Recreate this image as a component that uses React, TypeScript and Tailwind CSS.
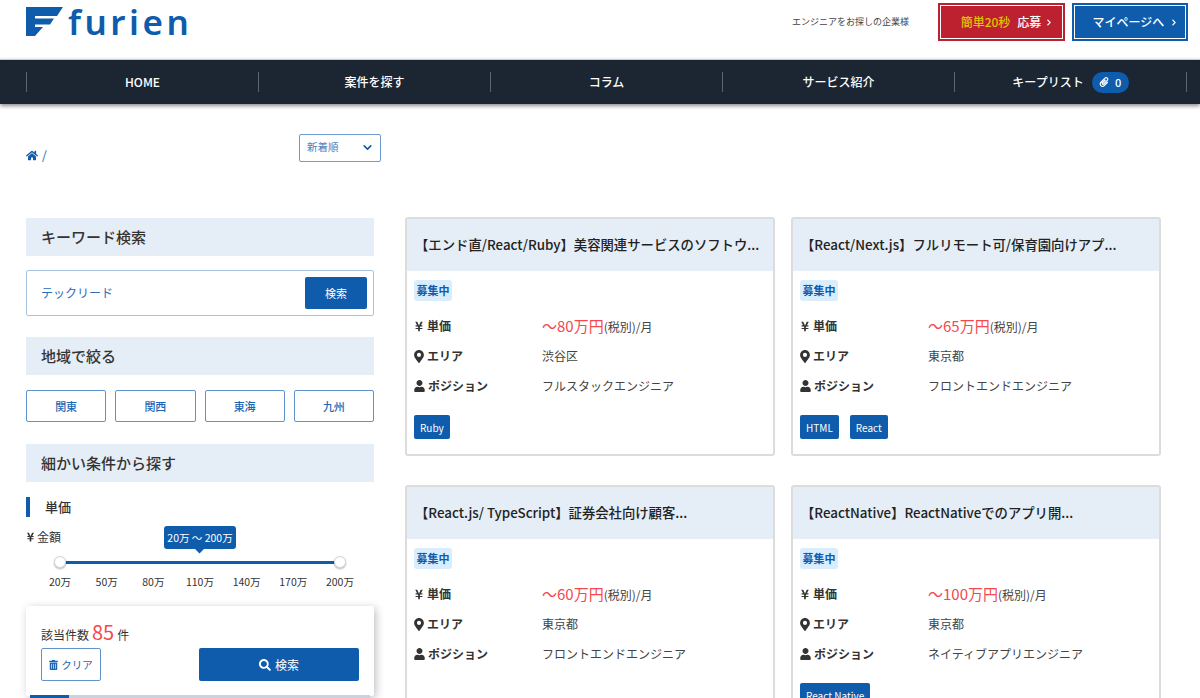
import { FaChevronRight, FaHome, FaMapMarkerAlt, FaPaperclip, FaSearch, FaTrashAlt, FaUser, FaYenSign } from 'react-icons/fa'
import { FiChevronDown } from 'react-icons/fi'

const font = { fontFamily: '"Noto Sans CJK JP", "Noto Sans", sans-serif' }

const navItems = ['HOME', '案件を探す', 'コラム', 'サービス紹介']
const areas = ['関東', '関西', '東海', '九州']
const ticks = ['20万', '50万', '80万', '110万', '140万', '170万', '200万']

const jobs = [
  { title: '【エンド直/React/Ruby】美容関連サービスのソフトウ...', price: '〜80万円', area: '渋谷区', position: 'フルスタックエンジニア', tags: ['Ruby'] },
  { title: '【React/Next.js】フルリモート可/保育園向けアプ...', price: '〜65万円', area: '東京都', position: 'フロントエンドエンジニア', tags: ['HTML', 'React'] },
  { title: '【React.js/ TypeScript】証券会社向け顧客...', price: '〜60万円', area: '東京都', position: 'フロントエンドエンジニア', tags: [] },
  { title: '【ReactNative】ReactNativeでのアプリ開...', price: '〜100万円', area: '東京都', position: 'ネイティブアプリエンジニア', tags: ['React Native'] },
]

function Logo() {
  return (
    <svg width="37" height="29" viewBox="0 0 37 29" className="shrink-0 mt-[4px]">
      <path d="M0 0H37L31 9H9V11.5H28L24 17.5H9V20H17L9 29H0Z" fill="#0f5cac" />
    </svg>
  )
}

function SectionTitle({ children }: { children: React.ReactNode }) {
  return (
    <div className="h-[38px] bg-[#e5edf6] pl-[15px] flex items-center text-[15px] font-medium text-[#333]">
      {children}
    </div>
  )
}

function Row({ icon, label, children }: { icon: React.ReactNode; label: string; children: React.ReactNode }) {
  return (
    <div className="flex items-center h-[30px]">
      <div className="w-[128px] flex items-center gap-[3px] text-[12px] font-bold text-[#333]">
        {icon}
        {label}
      </div>
      <div className="text-[12px] text-[#444] flex items-baseline">{children}</div>
    </div>
  )
}

function JobCard({ job }: { job: (typeof jobs)[number] }) {
  return (
    <div className="h-[239px] rounded-[3px] border-2 border-[#dcdcdc] bg-white overflow-hidden">
      <div className="h-[52px] bg-[#e5edf6] pl-[8px] flex items-center text-[13.35px] font-medium text-[#222] whitespace-nowrap">
        {job.title}
      </div>
      <div className="px-[7px] pt-[9px]">
        <div className="w-[38px] h-[21px] rounded-[3px] bg-[#d9edfd] text-[#0f5cac] text-[11px] font-bold flex items-center justify-center">
          募集中
        </div>
        <div className="mt-[10px]">
          <Row icon={<FaYenSign className="w-[10px] h-[11px]" />} label="単価">
            <span className="text-[15px] text-[#f5484d]">{job.price}</span>
            <span className="text-[12px]">(税別)/月</span>
          </Row>
          <Row icon={<FaMapMarkerAlt className="w-[10px] h-[13px]" />} label="エリア">
            {job.area}
          </Row>
          <Row icon={<FaUser className="w-[11px] h-[12px]" />} label="ポジション">
            {job.position}
          </Row>
        </div>
        <div className="flex gap-[11px] mt-[14px]">
          {job.tags.map((t) => (
            <div key={t} className="h-[24px] px-[6px] rounded-[2px] bg-[#0f5cac] text-white text-[10px] flex items-center">
              {t}
            </div>
          ))}
        </div>
      </div>
    </div>
  )
}

export default function App() {
  return (
    <div className="relative h-[698px] overflow-hidden bg-white" style={font}>
      <header className="h-[59px] flex items-start pl-[26px] pr-[12px] pt-[3px]">
        <Logo />
        <div className="ml-[5px] -mt-[3px] text-[35px] leading-[44px] font-semibold tracking-[0.1em] text-[#0f5cac]" style={{ fontFamily: '"Noto Sans", sans-serif' }}>
          furien
        </div>
        <div className="ml-auto mt-[12px] text-[9px] text-[#444]">エンジニアをお探しの企業様</div>
        <button className="ml-[29px] w-[127px] h-[38px] pl-[10px] bg-[#bd2130] border-2 border-[#bd2130] shadow-[inset_0_0_0_1px_white] text-[12px] font-medium flex items-center justify-center gap-[7px]">
          <span className="text-[#e0c400]">簡単20秒</span>
          <span className="text-white flex items-center">応募<FaChevronRight className="ml-[5px] w-[6px] h-[7px]" /></span>
        </button>
        <button className="ml-[7px] w-[116px] h-[38px] pl-[10px] bg-[#0f5cac] border-2 border-[#0f5cac] shadow-[inset_0_0_0_1px_white] text-white text-[12px] font-medium flex items-center justify-center">
          マイページへ<FaChevronRight className="ml-[7px] w-[6px] h-[7px]" />
        </button>
      </header>

      <nav className="h-[45px] bg-[#1c2633] pl-[26px] flex items-center shadow-[0_2px_4px_rgba(0,0,0,0.45)] border-t border-[#ccc]">
        {navItems.map((item) => (
          <div key={item} className="w-[232px] shrink-0 h-[20px] border-l border-[#5b6470] flex items-center justify-center text-white text-[12px] font-medium">
            {item}
          </div>
        ))}
        <div className="w-[233px] shrink-0 h-[20px] border-x border-[#5b6470] flex items-center justify-center gap-[8px] text-white text-[12px] font-medium">
          キープリスト
          <span className="w-[37px] h-[21px] rounded-full bg-[#0f5cac] flex items-center justify-center gap-[6px] text-[11px]">
            <FaPaperclip className="w-[10px] h-[10px]" />0
          </span>
        </div>
      </nav>

      <main className="flex pl-[26px] pt-[30px] gap-[31px]">
        <aside className="w-[348px] shrink-0">
          <div className="flex justify-between h-[84px] w-[355px]">
            <div className="flex items-center gap-[4px] h-[42px] text-[#0f5cac] text-[12px]">
              <FaHome className="w-[12px] h-[11px]" />
              <span>/</span>
            </div>
            <div className="w-[82px] h-[28px] rounded-[2px] border border-[#6d9bd2] pl-[7px] pr-[6px] pb-[2px] flex items-center justify-between text-[10.5px] text-[#4f82bd]">
              新着順
              <FiChevronDown className="w-[13px] h-[13px] text-[#0f5cac] stroke-[3]" />
            </div>
          </div>

          <SectionTitle>キーワード検索</SectionTitle>
          <div className="mt-[14px] h-[46px] rounded-[2px] border border-[#a9c5e6] pl-[14px] pr-[6px] flex items-center justify-between">
            <span className="text-[12px] text-[#2b6cb8]">テックリード</span>
            <button className="w-[62px] h-[32px] rounded-[2px] bg-[#0f5cac] text-white text-[11px]">検索</button>
          </div>

          <div className="mt-[21px]">
            <SectionTitle>地域で絞る</SectionTitle>
          </div>
          <div className="mt-[15px] grid grid-cols-4 gap-[9px]">
            {areas.map((a) => (
              <div key={a} className="h-[32px] rounded-[2px] border border-[#5f93cd] flex items-center justify-center text-[11px] font-medium text-[#1d66b3]">
                {a}
              </div>
            ))}
          </div>

          <div className="mt-[22px]">
            <SectionTitle>細かい条件から探す</SectionTitle>
          </div>
          <div className="mt-[15px] border-l-4 border-[#0f5cac] h-[20px] pl-[15px] flex items-center text-[13px] font-medium text-[#333]">
            単価
          </div>
          <div className="relative mt-[10px] h-[20px] flex items-center gap-[2px] text-[12px] text-[#333]">
            <FaYenSign className="w-[9px] h-[10px]" />
            金額
            <div className="absolute left-[138px] -top-[1px] w-[72px] h-[23px] rounded-[3px] bg-[#0f5cac] text-white text-[10.5px] flex items-center justify-center">
              20万 〜 200万
              <span className="absolute left-[32px] -bottom-[3px] w-[7px] h-[7px] rotate-45 bg-[#0f5cac]" />
            </div>
          </div>
          <div className="relative h-[12px] mt-[9px] mx-[28px]">
            <div className="absolute left-[6px] right-[6px] top-[4.5px] h-[3px] bg-[#0f5cac]" />
            <span className="absolute left-0 top-0 w-[12px] h-[12px] rounded-full bg-white border border-[#d5d5d5] shadow-[0_1px_2px_rgba(0,0,0,0.3)]" />
            <span className="absolute right-0 top-0 w-[12px] h-[12px] rounded-full bg-white border border-[#d5d5d5] shadow-[0_1px_2px_rgba(0,0,0,0.3)]" />
          </div>
          <div className="mt-[6px] mx-[14px] flex justify-between text-[10.5px] text-[#333]">
            {ticks.map((t) => (
              <span key={t} className="w-[40px] text-center">{t}</span>
            ))}
          </div>
        </aside>

        <section className="w-[756px] shrink-0 grid grid-cols-2 gap-x-[16px] gap-y-[29px] pt-[83px] content-start">
          {jobs.map((job) => (
            <JobCard key={job.title} job={job} />
          ))}
        </section>
      </main>

      {/* floating search bar */}
      <div className="absolute left-[26px] top-[606px] w-[348px] h-[90px] rounded-[2px] bg-white shadow-[2px_2px_8px_rgba(0,0,0,0.25)] px-[15px] pt-[11px]">
        <div className="flex items-baseline text-[12px] text-[#333] h-[27px]">
          該当件数
          <span className="mx-[3px] text-[20px] text-[#f5484d]">85</span>
          件
        </div>
        <div className="mt-[4px] flex justify-between items-center">
          <button className="w-[60px] h-[33px] rounded-[2px] border border-[#5f93cd] text-[#1d66b3] text-[10.5px] flex items-center justify-center gap-[3px]">
            <FaTrashAlt className="w-[9px] h-[10px]" />クリア
          </button>
          <button className="w-[160px] h-[33px] rounded-[2px] bg-[#0f5cac] text-white text-[12px] flex items-center justify-center gap-[4px]">
            <FaSearch className="w-[12px] h-[12px]" />検索
          </button>
        </div>
      </div>
      <div className="absolute left-[30px] top-[695px] w-[340px] h-[3px] bg-[#c8d3df]">
        <div className="w-[39px] h-full bg-[#0f5cac]" />
      </div>
    </div>
  )
}
